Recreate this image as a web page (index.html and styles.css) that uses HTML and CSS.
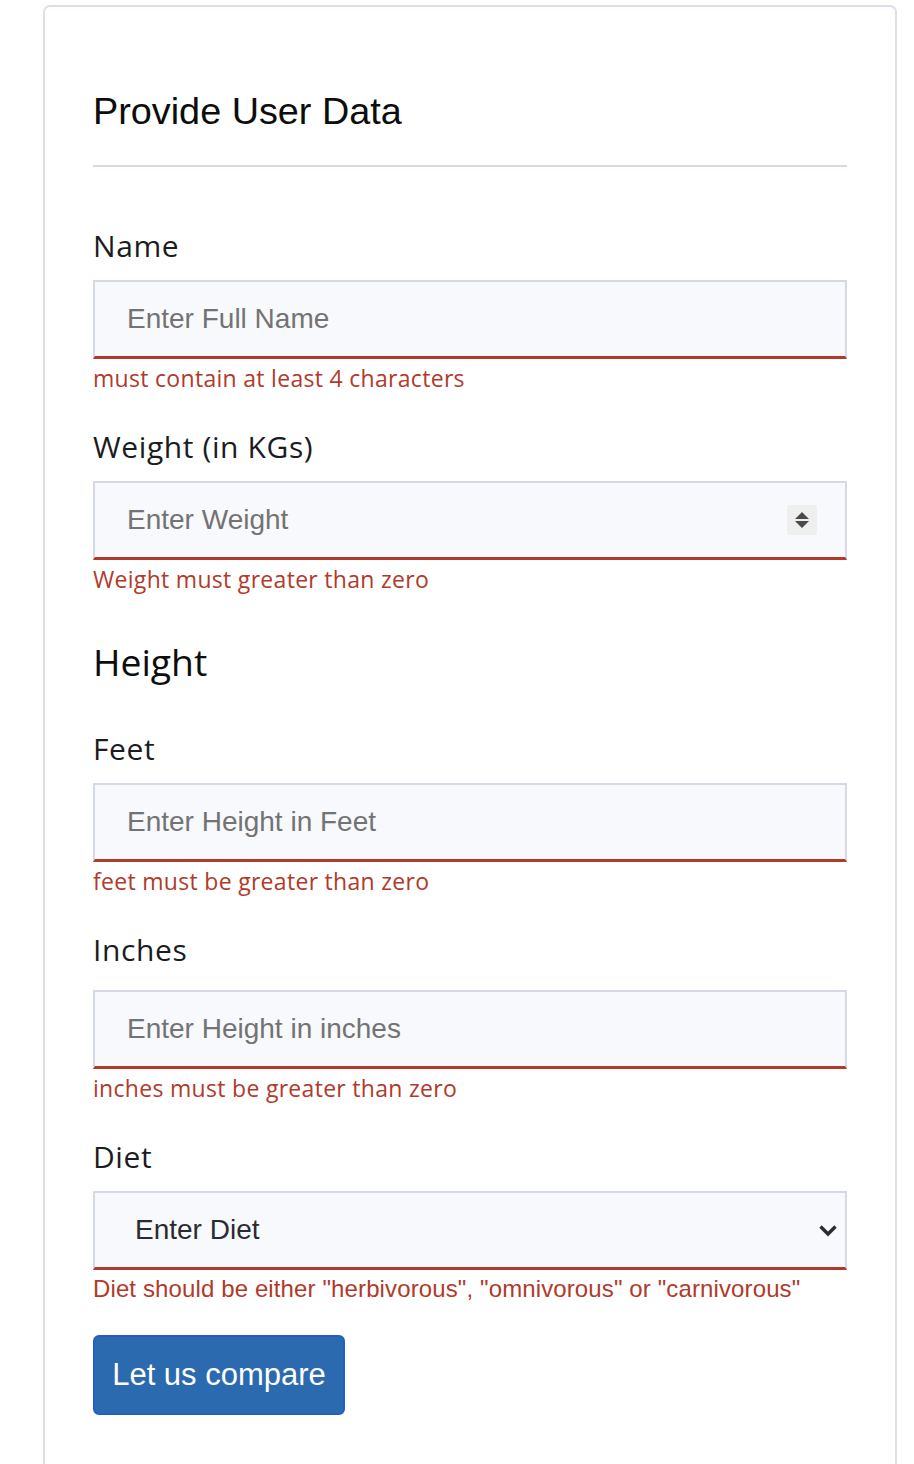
FILE: index.html
```html
<!DOCTYPE html>
<html lang="en">
<head>
<meta charset="utf-8">
<title>Provide User Data</title>
<link rel="stylesheet" href="styles.css">
</head>
<body>
<div class="card">
  <h2 class="title">Provide User Data</h2>
  <hr class="divider">
  <form class="form">
    <div class="field first">
      <label class="label">Name</label>
      <div class="input"><span class="ph">Enter Full Name</span></div>
      <div class="error">must contain at least 4 characters</div>
    </div>
    <div class="field">
      <label class="label">Weight (in KGs)</label>
      <div class="input">
        <span class="ph">Enter Weight</span>
        <span class="spinner">
          <svg width="18" height="22" viewBox="0 0 18 22"><path d="M9 3 L16 10 H2 Z M2 12 H16 L9 19 Z" fill="#4a4a4a"/></svg>
        </span>
      </div>
      <div class="error">Weight must greater than zero</div>
    </div>
    <h3 class="subhead">Height</h3>
    <div class="field after-sub">
      <label class="label">Feet</label>
      <div class="input"><span class="ph">Enter Height in Feet</span></div>
      <div class="error">feet must be greater than zero</div>
    </div>
    <div class="field inches">
      <label class="label">Inches</label>
      <div class="input"><span class="ph">Enter Height in inches</span></div>
      <div class="error">inches must be greater than zero</div>
    </div>
    <div class="field">
      <label class="label">Diet</label>
      <div class="input select">
        <span class="val">Enter Diet</span>
        <svg class="chev" width="20" height="13" viewBox="0 0 20 13"><path d="M2.5 2.5 L10 10 L17.5 2.5" fill="none" stroke="#2b2d33" stroke-width="3.4"/></svg>
      </div>
      <div class="error diet">Diet should be either "herbivorous", "omnivorous" or "carnivorous"</div>
    </div>
    <div class="actions">
      <button type="button" class="btn">Let us compare</button>
    </div>
  </form>
</div>
</body>
</html>
```

FILE: styles.css
```css
html, body {
  margin: 0;
  padding: 0;
  background: #ffffff;
}
body {
  padding: 5px 17px 0 43px;
  font-family: "Open Sans", "Liberation Sans", sans-serif;
  color: #1b1c1f;
}
.card {
  border: 2px solid #dcdfeb;
  border-bottom: none;
  border-radius: 7px 7px 0 0;
  padding: 82px 48px 48px 48px;
  min-height: 1500px;
  box-sizing: border-box;
}
.title {
  margin: 0;
  font-family: "Liberation Sans", Arial, sans-serif;
  font-weight: 400;
  font-size: 37.8px;
  line-height: 44px;
  color: #0d0d0d;
}
.divider {
  border: none;
  border-top: 2px solid #d5d9e5;
  margin: 32px 0 0 0;
}
.form {
  display: flex;
  flex-direction: column;
}
.field {
  display: flex;
  flex-direction: column;
}
.label {
  font-size: 30px;
  line-height: 34px;
  letter-spacing: 0.6px;
  margin-top: 37px;
  margin-bottom: 17px;
  color: #1b1c1f;
}
.field.first .label { margin-top: 62px; }
.field.after-sub .label { margin-top: 48px; }
.field.inches .label { margin-bottom: 23px; }
.input {
  height: 79px;
  box-sizing: border-box;
  border: 2px solid #d5d9e5;
  border-bottom: 3px solid #b13a2b;
  background: #f8f9fc;
  display: flex;
  align-items: center;
  padding: 0 28px 0 32px;
  font-family: "Liberation Sans", Arial, sans-serif;
  font-size: 28px;
}
.ph { color: #737373; flex: 1; }
.spinner {
  width: 30px;
  height: 30px;
  background: #efefef;
  border-radius: 2px;
  display: flex;
  align-items: center;
  justify-content: center;
}
.select { padding-left: 40px; padding-right: 7px; }
.val { color: #2a2b30; flex: 1; }
.chev { display: block; }
.error {
  color: #b13a2b;
  font-size: 23px;
  line-height: 30px;
  letter-spacing: 0.3px;
  margin-top: 4px;
}
.error.diet {
  font-family: "Liberation Sans", Arial, sans-serif;
  font-size: 24px;
  letter-spacing: 0.12px;
}
.subhead {
  margin: 46px 0 0 0;
  font-weight: 400;
  font-size: 37.3px;
  line-height: 44px;
  color: #0d0d0d;
}
.actions { margin-top: 31px; }
.btn {
  font-family: "Liberation Sans", Arial, sans-serif;
  font-size: 31px;
  color: #ffffff;
  background: #2b6aaf;
  border: 2px solid #215fc6;
  border-radius: 6px;
  height: 80px;
  padding: 0 15px;
  width: 252px;
  cursor: pointer;
}
```
